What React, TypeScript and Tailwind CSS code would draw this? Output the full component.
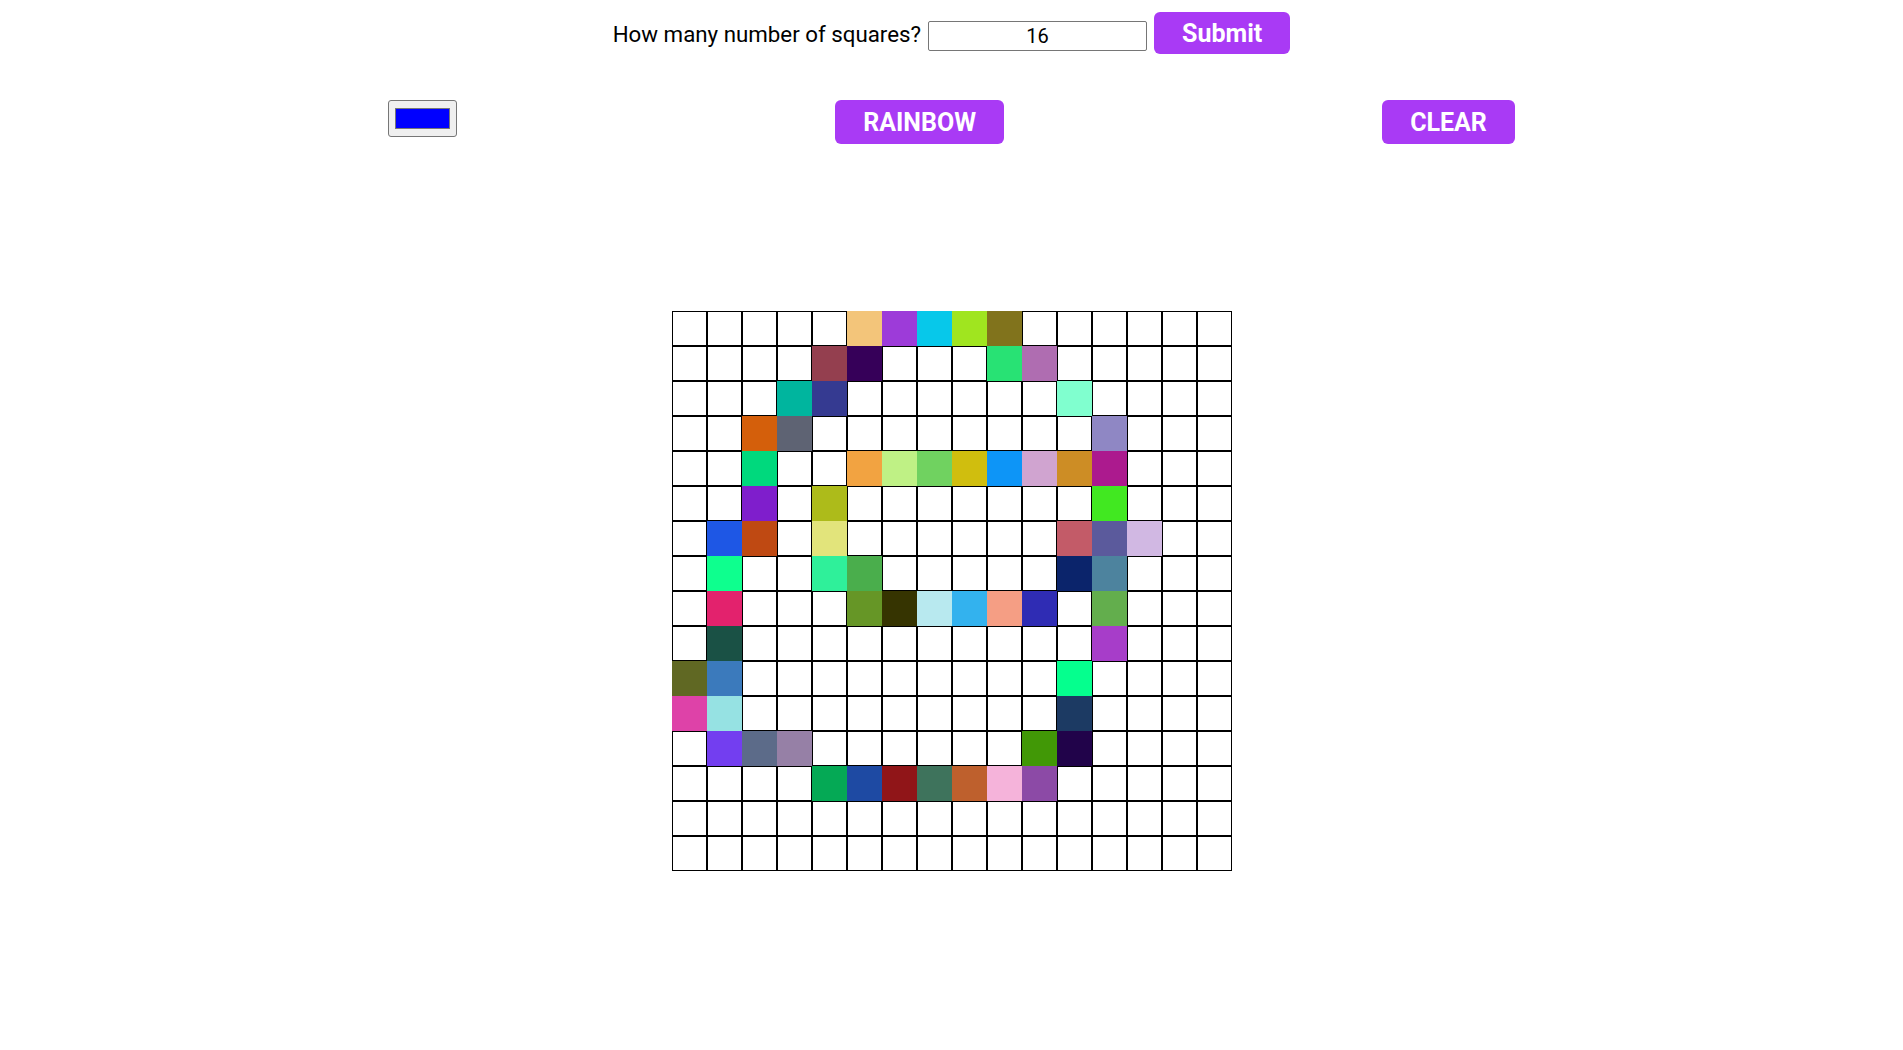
import { useState } from "react";

// painted cells: [row, col, color]
const PAINTED: [number, number, string][] = [
  [0, 5, "#f3c57a"], [0, 6, "#9d3bd9"], [0, 7, "#07c8ea"], [0, 8, "#a0e51f"], [0, 9, "#81731c"],
  [1, 4, "#943f4f"], [1, 5, "#360059"], [1, 9, "#28e274"], [1, 10, "#af6db1"],
  [2, 3, "#00b59e"], [2, 4, "#353a91"], [2, 11, "#80ffcf"],
  [3, 2, "#d45f0b"], [3, 3, "#5e6373"], [3, 12, "#8f87c4"],
  [4, 2, "#00d97d"], [4, 5, "#f2a341"], [4, 6, "#bff185"], [4, 7, "#70d260"], [4, 8, "#d0be0e"],
  [4, 9, "#0d95f7"], [4, 10, "#d0a4d0"], [4, 11, "#cd8d25"], [4, 12, "#ac1a8e"],
  [5, 2, "#7f1ecc"], [5, 4, "#adbb1a"], [5, 12, "#41e821"],
  [6, 1, "#1e57e5"], [6, 2, "#bf4912"], [6, 4, "#e2e47b"], [6, 11, "#c35b68"], [6, 12, "#5b5a9c"], [6, 13, "#d1b8e3"],
  [7, 1, "#0eff8e"], [7, 4, "#2ff09a"], [7, 5, "#4aae4c"], [7, 11, "#0b246b"], [7, 12, "#4d839e"],
  [8, 1, "#e3226d"], [8, 5, "#669626"], [8, 6, "#363401"], [8, 7, "#b8e9ef"], [8, 8, "#33b2ee"],
  [8, 9, "#f59e84"], [8, 10, "#2f2cb4"], [8, 12, "#63ae4d"],
  [9, 1, "#1a5145"], [9, 12, "#a73dc9"],
  [10, 0, "#606823"], [10, 1, "#3b7abc"], [10, 11, "#05ff8e"],
  [11, 0, "#de42a8"], [11, 1, "#96e2e3"], [11, 11, "#1c3a63"],
  [12, 1, "#733ef0"], [12, 2, "#5c6b89"], [12, 3, "#9680a6"], [12, 10, "#419806"], [12, 11, "#21034a"],
  [13, 4, "#05a955"], [13, 5, "#1e4aa3"], [13, 6, "#901518"], [13, 7, "#3e735c"], [13, 8, "#be602d"],
  [13, 9, "#f5b3da"], [13, 10, "#8c4aa6"],
];

function initialCells(size: number) {
  const cells: (string | null)[] = Array(size * size).fill(null);
  PAINTED.forEach(([r, c, color]) => {
    cells[r * size + c] = color;
  });
  return cells;
}

export default function App() {
  const [size, setSize] = useState(16);
  const [input, setInput] = useState("16");
  const [cells, setCells] = useState<(string | null)[]>(() => initialCells(16));

  const handleSubmit = () => {
    const n = parseInt(input, 10);
    if (!n || n < 1 || n > 100) return;
    setSize(n);
    setCells(Array(n * n).fill(null));
  };

  const paint = (i: number) => {
    const color = "#" + Math.floor(Math.random() * 0xffffff).toString(16).padStart(6, "0");
    setCells((prev) => prev.map((c, j) => (j === i ? color : c)));
  };

  const cellPx = 560 / size;

  return (
    <div className="min-h-[1050px] bg-white font-['Roboto',sans-serif] text-black">
      {/* size form */}
      <div className="pt-[12px] flex justify-center items-start gap-[7px]">
        <label className="mt-[11px] text-[22.3px] leading-none">How many number of squares?</label>
        <input
          value={input}
          onChange={(e) => setInput(e.target.value)}
          className="mt-[9px] w-[219px] h-[30px] border border-[#767676] rounded-[2px] text-center text-[20px] leading-none outline-none"
        />
        <button
          onClick={handleSubmit}
          className="h-[42px] px-[28px] rounded-[6px] bg-[#a93af5] text-white text-[25px] font-bold leading-none"
        >
          Submit
        </button>
      </div>

      {/* controls */}
      <div className="mt-[46px] flex justify-evenly items-start px-[10px]">
        <div className="w-[69px] h-[37px] rounded-[3px] border border-[#767676] bg-[#efefef] flex items-center justify-center">
          <div className="w-[55px] h-[21px] border border-[#777777] bg-[#0000ff]" />
        </div>
        <button className="h-[44px] px-[28px] rounded-[6px] bg-[#a93af5] text-white text-[25px] font-bold leading-none">
          RAINBOW
        </button>
        <button className="h-[44px] px-[28px] rounded-[6px] bg-[#a93af5] text-white text-[25px] font-bold leading-none">
          CLEAR
        </button>
      </div>

      {/* sketch grid */}
      <div className="mt-[167px] mx-auto w-[560px] flex flex-wrap">
        {cells.map((color, i) => (
          <div
            key={i}
            onMouseEnter={() => paint(i)}
            className="box-border border border-black bg-white"
            style={{
              width: cellPx,
              height: cellPx,
              ...(color ? { backgroundColor: color, borderColor: color } : {}),
            }}
          />
        ))}
      </div>
    </div>
  );
}
